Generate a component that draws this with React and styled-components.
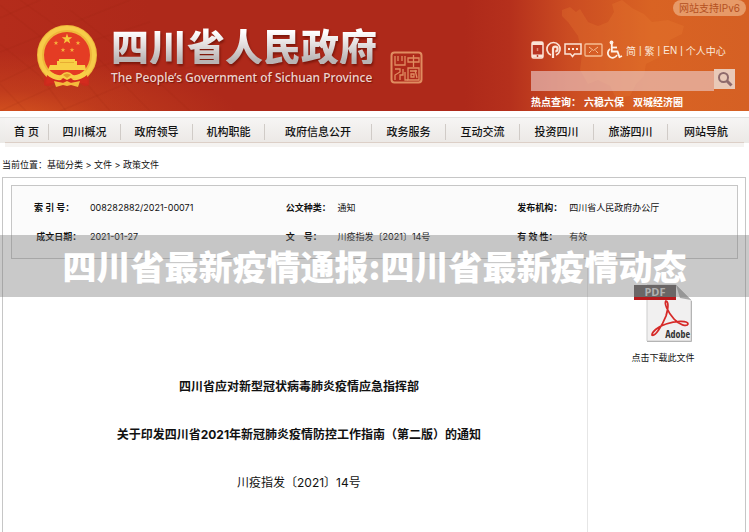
import styled, { createGlobalStyle } from 'styled-components';

const GlobalStyle = createGlobalStyle`
    * {
        box-sizing: border-box;
    }

    body {
        margin: 0;
        background-color: #fff;
        color: #111;
        font-family: Inter, 'Noto Sans CJK SC', sans-serif;
        font-size: 9px;
    }

    a {
        color: inherit;
        text-decoration: none;
    }
`

const Page = styled.div`
    position: relative;
    display: flex;
    flex-direction: column;
    min-height: 100vh;
`

const Header = styled.header`
    position: relative;
    display: flex;
    justify-content: space-between;
    height: 111px;
    overflow: hidden;
    background:
        radial-gradient(ellipse 240px 70px at 0% 110%, #d9581f 0%, rgba(205, 75, 30, 0.5) 45%, transparent 100%),
        linear-gradient(to right, #b42c1b 0%, #ae291a 20%, #ae291a 62%, #b5301c 68%, #cb4c22 76%, #d96323 87%, #d56024 100%);
`

const Backdrop = styled.svg`
    position: absolute;
    top: 0;
    height: 100%;
    ${props => props.$side}: 0;
`

const Brand = styled.a`
    position: relative;
    display: flex;
    align-items: flex-start;
    padding: 24px 0 0 36px;

    & svg {
        flex: none;
    }
`

const BrandText = styled.div`
    margin: 2px 13px 0;
    white-space: nowrap;
`

const BrandName = styled.h1`
    margin: 0;
    font-family: 'Noto Sans CJK SC', sans-serif;
    font-size: 38px;
    font-weight: 900;
    line-height: 38px;
    color: transparent;
    background: linear-gradient(#fff 15%, #e2dddd 50%, #b9b4b4 90%);
    background-clip: text;
    filter: drop-shadow(1px 2px 1px rgba(90, 10, 0, 0.6));
`

const BrandSub = styled.p`
    margin: 6px 0 0;
    font-family: 'Noto Sans', sans-serif;
    font-size: 12px;
    font-weight: 500;
    line-height: 16px;
    color: #ecd5d0;
    text-shadow: 1px 1px 1px rgba(90, 10, 0, 0.6);
`

const SealBox = styled.div`
    padding-top: 27px;
`

const Tools = styled.div`
    position: relative;
    display: flex;
    flex-direction: column;
    width: 218px;
    padding-right: 14px;
    color: #fbe9dc;
`

const Badge = styled.a`
    align-self: flex-end;
    margin-right: -11px;
    padding: 0 6px;
    border-radius: 8px;
    background-color: #e79a68;
    color: #b4501f;
    font-size: 10px;
    line-height: 16px;
`

const Links = styled.nav`
    display: flex;
    align-items: center;
    gap: 3px;
    height: 20px;
    margin-top: 24px;
    font-family: 'Liberation Sans', 'Noto Sans CJK SC', sans-serif;
    font-size: 10px;
    white-space: nowrap;

    & svg {
        display: block;
    }
`

const IconGroup = styled.div`
    display: flex;
    align-items: center;
    gap: 2px;
`

const Search = styled.form`
    display: flex;
    align-items: flex-start;
    margin-top: 9px;

    & input {
        flex: 1;
        min-width: 0;
        height: 20px;
        margin-top: 2px;
        padding: 0 4px;
        border: 0;
        background-color: rgba(235, 205, 205, 0.62);
    }

    & button {
        display: grid;
        place-items: center;
        width: 21px;
        height: 20px;
        padding: 0;
        border: 0;
        background-color: #e9c9b8;
    }
`

const HotWords = styled.div`
    display: flex;
    gap: 9px;
    margin-top: 3px;
    font-size: 10px;
    font-weight: 700;
    line-height: 16px;
    color: #fff;

    & span {
        margin-right: -6px;
    }
`

const NavBar = styled.nav`
    margin-top: 6px;
    padding: 0 5px;
    border-top: 1px solid #e2e1e0;
    background: linear-gradient(#f5f4f3, #ebe9e6) 0 0 / 100% 25px no-repeat;
`

const NavList = styled.ul`
    display: grid;
    grid-template-columns: 43fr 72fr 72fr 72fr 107fr 74fr 74fr 74fr 74fr 77fr;
    align-items: center;
    height: 29px;
    margin: 0;
    padding: 0;
    list-style: none;
    background: linear-gradient(#f6f5f4, #ece9e6 24px, #dccfc7 24px, #dccfc7 25px, #f5f3f1 25px);
`

const NavItem = styled.li`
    height: 16px;
    margin-bottom: 2px;
    border-left: 1px solid #d0cbc7;
    font-size: 11px;
    font-weight: 500;
    line-height: 16px;
    text-align: center;
    white-space: nowrap;

    &:first-child {
        border-left: 0;
    }
`

const Crumbs = styled.nav`
    padding: 10px 2px 4px;
    line-height: 16px;
`

const Panel = styled.main`
    flex: 1;
    display: flex;
    flex-direction: column;
    margin: 0 3px 0 2px;
    padding: 7px 7px 0 8px;
    border: 1px solid #c6c6c6;
    border-bottom: 0;
`

const Details = styled.dl`
    display: grid;
    grid-template-columns: 56fr 196fr 52fr 180fr 52fr 168fr;
    margin: 0;
    padding: 7px 0 7px 22px;
    border: 1px solid #c6c6c6;
    background-color: #fbfbfb;
    line-height: 29px;
    white-space: nowrap;

    & dt {
        font-weight: 700;
        white-space: pre;
    }

    & dd {
        margin: 0;
    }
`

const Content = styled.div`
    flex: 1;
    display: grid;
    grid-template-columns: 575fr 151fr;
`

const Article = styled.article`
    padding-top: 104px;
    font-size: 12px;
    text-align: center;

    & h2,
    & p {
        margin: 0;
        font-size: 12px;
        line-height: 48px;
    }
`

const Download = styled.aside`
    padding-top: 24px;
    border-left: 1px solid #e6e6e6;
    text-align: center;

    & a {
        display: block;
        line-height: 16px;
    }

    & svg {
        display: block;
        margin: 0 auto 7px;
    }
`

const Banner = styled.div`
    position: absolute;
    top: 235px;
    left: 0;
    right: 0;
    background-color: rgba(120, 120, 120, 0.4);
    color: #fff;
    font-family: 'Noto Sans CJK SC', sans-serif;
    font-size: 34px;
    font-weight: 900;
    line-height: 62px;
    text-align: center;
    white-space: nowrap;
`

const navItems = ['首 页', '四川概况', '政府领导', '机构职能', '政府信息公开', '政务服务', '互动交流', '投资四川', '旅游四川', '网站导航'];

const details = [
    ['索 引 号：', '008282882/2021-00071'],
    ['公文种类：', '通知'],
    ['发布机构：', '四川省人民政府办公厅'],
    [' 成文日期：', '2021-01-27'],
    ['文　号：', '川疫指发〔2021〕14号'],
    ['有 效 性：', '有效'],
];

const starPoints = (cx, cy, r) => Array.from({ length: 10 }, (_, i) => {
    const radius = i % 2 ? r * 0.4 : r;
    const angle = (i * Math.PI) / 5 - Math.PI / 2;
    return `${cx + radius * Math.cos(angle)},${cy + radius * Math.sin(angle)}`;
}).join(' ');

function Emblem() {
    return (
        <svg width="62" height="64" viewBox="0 0 62 64">
            <path d="M9 45 L8 61 Q14 64 19 58 L43 58 Q48 64 53 61 L53 45Z" fill="#cb2a1d" />
            <circle cx="31" cy="31" r="26" fill="#e43c24" />
            <circle cx="31" cy="31" r="26.5" fill="none" stroke="#efb73b" strokeWidth="7" />
            <circle cx="31" cy="31" r="27" fill="none" stroke="#f7cc49" strokeWidth="4" />
            <path d="M11 51 Q18 57 25 56 L31 50 L37 56 Q44 57 51 51 L52 60 Q44 58 31 59 Q18 58 10 60Z" fill="#d32b1e" />
            <polygon points={starPoints(31, 15, 5.5)} fill="#f6c63c" />
            <polygon points={starPoints(20, 19, 2.5)} fill="#f6b03c" />
            <polygon points={starPoints(42, 19, 2.5)} fill="#f6b03c" />
            <polygon points={starPoints(27, 26, 2.5)} fill="#f6b03c" />
            <polygon points={starPoints(36, 26, 2.5)} fill="#f6b03c" />
            <path d="M23 35 H39 V37 H41 V41 H49 L50 46 H12 L14 41 H21 V37 H23Z" fill="#f8cf45" />
            <path d="M24 38.500 H38" stroke="#e3a52f" strokeWidth="0.800" />
            <path d="M12 46 Q20 52 25 51 Q31 45 37 51 Q42 52 50 46 L47 53 Q39 56 35 54 L31 56 L27 54 Q22 56 15 53Z" fill="#f8cf45" />
            <path d="M27 51 Q31 48 35 51 L31 54Z" fill="#e39a2b" />
            <path d="M18 57 L27 59 L31 57 L35 59 L44 57 L42 63 L35 61 L31 62 L27 61 L20 63Z" fill="#f4bb3c" />
        </svg>
    )
}

function Seal() {
    return (
        <svg width="33" height="33" viewBox="0 0 33 33" fill="none" stroke="#e08c60">
            <rect x="1.500" y="1.500" width="30" height="30" rx="3" strokeWidth="2" />
            <path d="M5 5V14H15V5 M8 5V10 M12 5V10 M5 18H10V21L5 24V29 M13 18V24H10V29 M15 21V29H18" strokeWidth="1.300" />
            <path d="M18 7H29V11H18Z M23.500 4V16 M18 17H29V29H18Z M20 20H27 M21 23H24V26H21Z M25 19L27 27" strokeWidth="1.300" />
        </svg>
    )
}

function PhoneIcon() {
    return (
        <svg width="13" height="18" viewBox="0 0 13 18">
            <rect x="1" y="1" width="11" height="16" rx="1.500" fill="#b93522" stroke="#fbe3d6" strokeWidth="1.500" />
            <path d="M1 2.500H12 M1 15H12" stroke="#fbe3d6" strokeWidth="3" />
            <path d="M6.500 7V10" stroke="#e08a70" strokeWidth="1.500" />
            <circle cx="6.500" cy="15" r="0.900" fill="#b93522" />
        </svg>
    )
}

function PinIcon() {
    return (
        <svg width="16" height="18" viewBox="0 0 16 18" fill="none" stroke="#fbe3d6" strokeWidth="1.700">
            <path d="M5 14A6.500 6.500 0 1 1 10 14" />
            <path d="M7 17V8A2.300 2.300 0 1 1 9.300 10.300" strokeWidth="2.200" />
        </svg>
    )
}

function ChatIcon() {
    return (
        <svg width="18" height="18" viewBox="0 0 18 18" fill="none" stroke="#fbe3d6" strokeWidth="1.500">
            <path d="M1 3H17V13H10.500L8.500 15.500L6.500 13H1Z" />
            <path d="M4 8H6 M8 8H10 M12 8H14" strokeWidth="2" />
        </svg>
    )
}

function MailIcon() {
    return (
        <svg width="19" height="18" viewBox="0 0 19 18" fill="none" stroke="#f6bd93">
            <rect x="1" y="3" width="17" height="12" rx="1" strokeWidth="1.300" />
            <path d="M5 6L9.500 9.500L14 6 M5 12L7.500 9.500 M14 12L11.500 9.500" />
        </svg>
    )
}

function AccessIcon() {
    return (
        <svg width="18" height="20" viewBox="0 0 18 20" fill="none" stroke="#fff1e6" strokeWidth="1.800">
            <circle cx="6.500" cy="2.500" r="1.900" fill="#fff1e6" stroke="none" />
            <path d="M6.800 4V11.500H12.500L14.500 17L17 16" />
            <path d="M7 7.500H12" />
            <path d="M5 9A4.800 4.800 0 1 0 12 15" />
        </svg>
    )
}

function PdfIcon() {
    return (
        <svg width="60" height="60" viewBox="0 0 60 60">
            <path d="M14 2H43L58 17V58H14Z" fill="#f1f0f0" stroke="#cdcdcd" />
            <path d="M43 2L58 17L47 15Z" fill="#aaa" />
            <path d="M14 58.500H58.500V18" fill="none" stroke="#b4b4b4" />
            <rect x="1" y="2" width="42" height="15" fill="#625b5b" />
            <rect x="1" y="14" width="42" height="3" fill="#b8191c" />
            <text x="22" y="13" textAnchor="middle" fontFamily="Open Sans" fontSize="11" fontWeight="700" fill="#d8d8d8">PDF</text>
            <path d="M33 18C31 20 34 28 41 36C46 42 54 44 55 41C55 38 44 37 33 41C24 44 19 49 19 52C22 54 29 43 33 33C35 26 36 19 33 18Z" fill="none" stroke="#d62a28" strokeWidth="1.800" />
            <text x="57" y="55" textAnchor="end" fontFamily="Open Sans Condensed, Open Sans" fontSize="10" fontWeight="700" fill="#333">Adobe</text>
        </svg>
    )
}

export default function App() {
    return (
        <>
            <GlobalStyle />
            <Page>
                <Header>
                    <Backdrop $side="left" width="240" viewBox="0 0 240 111" fill="none" stroke="#8f2416" strokeOpacity="0.1" strokeWidth="1.500" aria-hidden="true">
                        <path d="M0 18L40 0 M0 52L80 20L130 0 M0 82L70 48L150 22 M0 111L90 70L180 40 M60 111L130 82L220 60" />
                        <path d="M0 5L60 52L110 111 M20 0L90 50L150 111 M0 44L40 76L66 111 M0 84L26 111 M70 10L140 65L190 111" />
                    </Backdrop>
                    <Backdrop $side="right" width="249" viewBox="0 0 249 111" aria-hidden="true">
                        <path d="M62 10L70 7L76 12L80 9L88 22L98 26L108 22L114 12L112 4L122 0L132 8L144 14L152 22L168 20L184 26L182 34L170 40L168 50L158 58L146 64L144 76L136 84L130 96L116 98L110 86L98 80L88 84L80 70L82 54L78 36L68 22L62 16Z" fill="#ea8135" fillOpacity="0.25" />
                    </Backdrop>
                    <Brand href="#">
                        <Emblem />
                        <BrandText>
                            <BrandName>四川省人民政府</BrandName>
                            <BrandSub>The People’s Government of Sichuan Province</BrandSub>
                        </BrandText>
                        <SealBox>
                            <Seal />
                        </SealBox>
                    </Brand>
                    <Tools>
                        <Badge href="#">网站支持IPv6</Badge>
                        <Links>
                            <IconGroup>
                                <a href="#" aria-label="手机版"><PhoneIcon /></a>
                                <a href="#" aria-label="政务平台"><PinIcon /></a>
                                <a href="#" aria-label="留言"><ChatIcon /></a>
                                <a href="#" aria-label="邮箱"><MailIcon /></a>
                                <a href="#" aria-label="无障碍"><AccessIcon /></a>
                            </IconGroup>
                            <a href="#">简</a>|<a href="#">繁</a>|<a href="#">EN</a>|<a href="#">个人中心</a>
                        </Links>
                        <Search>
                            <input type="text" aria-label="搜索" />
                            <button type="button" aria-label="搜索">
                                <svg width="16" height="16" viewBox="0 0 16 16" fill="none" stroke="#8e6a6c">
                                    <circle cx="6.500" cy="6.500" r="4.500" strokeWidth="2" />
                                    <path d="M10 10L14.500 14.500" strokeWidth="3" />
                                </svg>
                            </button>
                        </Search>
                        <HotWords>
                            <span>热点查询：</span>
                            <a href="#">六稳六保</a>
                            <a href="#">双城经济圈</a>
                        </HotWords>
                    </Tools>
                </Header>
                <NavBar>
                    <NavList>
                        {navItems.map(item => (
                            <NavItem key={item}><a href="#">{item}</a></NavItem>
                        ))}
                    </NavList>
                </NavBar>
                <Crumbs>
                    当前位置：<a href="#">基础分类</a> &gt; <a href="#">文件</a> &gt; <a href="#">政策文件</a>
                </Crumbs>
                <Panel>
                    <Details>
                        {details.map(([label, value]) => [
                            <dt key={label}>{label}</dt>,
                            <dd key={value}>{value}</dd>,
                        ])}
                    </Details>
                    <Content>
                        <Article>
                            <h2>四川省应对新型冠状病毒肺炎疫情应急指挥部</h2>
                            <h2>关于印发四川省2021年新冠肺炎疫情防控工作指南（第二版）的通知</h2>
                            <p>川疫指发〔2021〕14号</p>
                        </Article>
                        <Download>
                            <a href="#">
                                <PdfIcon />
                                点击下载此文件
                            </a>
                        </Download>
                    </Content>
                </Panel>
                <Banner>四川省最新疫情通报:四川省最新疫情动态</Banner>
            </Page>
        </>
    )
}
